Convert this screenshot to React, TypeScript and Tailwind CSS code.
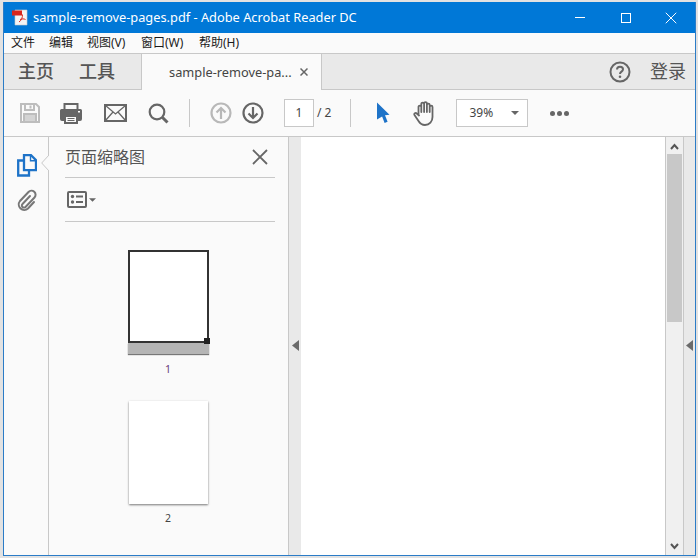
const sans = "font-['Noto_Sans','Noto_Sans_CJK_SC',sans-serif]";

const PdfIcon = () => (
  <svg width="17" height="17" viewBox="0 0 17 17">
    <path d="M3 1h12v15H3z" fill="#f4f4f4" stroke="#c9c9c9" strokeWidth="0.6" />
    <rect x="0" y="1.500" width="10" height="5" fill="#d9261c" />
    <path d="M7 13c2-1 4-5 3.400-7.500M8 10.500c2-.8 4-.8 5.500 0" fill="none" stroke="#d9261c" strokeWidth="1" />
  </svg>
);

const SaveIcon = () => (
  <svg width="22" height="22" viewBox="0 0 22 22" fill="none" stroke="#bdbdbd" strokeWidth="2">
    <path d="M2 2h15l3 3v15H2z" />
    <path d="M6 2v6h9V2M5 20v-8h12v8" />
    <path d="M11.500 3.500v3" />
    <rect x="6" y="13" width="10" height="6" fill="#d4d4d4" stroke="none" />
  </svg>
);

const PrintIcon = () => (
  <svg width="24" height="22" viewBox="0 0 24 22">
    <path d="M5.500 7V2h13v5" fill="none" stroke="#666" strokeWidth="2" />
    <path d="M2.500 7h19A1.500 1.500 0 0 1 23 8.500V17a2 2 0 0 1-2 2h-2v-6H5v6H3a2 2 0 0 1-2-2V8.500A1.500 1.500 0 0 1 2.500 7z" fill="#666" />
    <path d="M6 14h12v7H6z" fill="#fafafa" stroke="#666" strokeWidth="2" />
    <path d="M8.500 16.500h7M8.500 18.500h7" stroke="#666" strokeWidth="1" />
    <rect x="19" y="9" width="2" height="1.500" fill="#fff" />
  </svg>
);

const MailIcon = () => (
  <svg width="23" height="18" viewBox="0 0 23 18" fill="none" stroke="#666">
    <rect x="1" y="1" width="21" height="16" strokeWidth="2" />
    <path d="M1.500 1.500l10 8.500 10-8.500M1.500 16.500l7.500-8.500M21.500 16.500l-7.500-8.500" strokeWidth="1.300" />
  </svg>
);

const SearchIcon = () => (
  <svg width="21" height="21" viewBox="0 0 21 21" fill="none" stroke="#666">
    <circle cx="9" cy="9" r="7.300" strokeWidth="2.200" />
    <path d="M14.500 14.500l5 5" strokeWidth="3" />
  </svg>
);

const ArrowCircle = ({ color, up }: { color: string; up?: boolean }) => (
  <svg width="22" height="22" viewBox="0 0 22 22" fill="none" stroke={color} strokeWidth="2.200">
    <circle cx="11" cy="11" r="9.500" />
    {up ? <path d="M11 17V6M6.500 10.500L11 6l4.500 4.500" /> : <path d="M11 5v11M6.500 11.500L11 16l4.500-4.500" />}
  </svg>
);

const PointerIcon = () => (
  <svg width="14" height="22" viewBox="0 0 14 22">
    <path d="M1 0.500l12.500 12.200-4.500.6 2.600 6.500-3 1.200-2.500-6.500L1 17.500z" fill="#1e73c8" />
  </svg>
);

const HandIcon = () => (
  <svg width="23" height="25" viewBox="0 0 23 25" fill="none" stroke="#666" strokeWidth="1.800" strokeLinecap="round">
    <path d="M5.500 14V6a1.300 1.300 0 0 1 2.800 0v5M8.300 11V3a1.300 1.300 0 0 1 2.800 0v8M11.100 11V2.500a1.300 1.300 0 0 1 2.800 0V11M13.900 11V4a1.300 1.300 0 0 1 2.800 0v7M16.700 11V6a1.300 1.300 0 0 1 2.800 0v10c0 4.500-3 8-7.500 8-3.500 0-5-1.500-6.500-4l-4-6c-.8-1.500 1-2.800 2.300-1.500l2.200 2" />
  </svg>
);

const HelpIcon = () => (
  <svg width="22" height="22" viewBox="0 0 22 22" fill="none" stroke="#666" strokeWidth="2">
    <circle cx="11" cy="11" r="9.500" />
    <path d="M8 8.500c0-1.800 1.300-2.800 3-2.800s3 1 3 2.600c0 2.400-3 2.300-3 4.700" />
    <circle cx="11" cy="15.800" r="1.300" fill="#666" stroke="none" />
  </svg>
);

const PagesIcon = () => (
  <svg width="20" height="23" viewBox="0 0 20 23" fill="none" stroke="#1e73c8" strokeWidth="2.300">
    <path d="M7 1.200h7l5 5v10H7z" />
    <path d="M13.500 1.200v5.500H19" strokeWidth="1.400" />
    <path d="M7 6.500H1.200v15H12v-5" />
  </svg>
);

const ClipIcon = () => (
  <svg width="21" height="22" viewBox="0 0 21 22" fill="none" stroke="#777" strokeWidth="2" strokeLinecap="round">
    <path d="M13 7l-7.500 8a2 2 0 0 0 3 3l9-9.500a4 4 0 0 0-6-5.500l-8.500 9a5.500 5.500 0 0 0 8 7.500l6-6.500" />
  </svg>
);

const ListIcon = () => (
  <svg width="20" height="17" viewBox="0 0 20 17">
    <rect x="1" y="1" width="18" height="15" rx="1" fill="none" stroke="#666" strokeWidth="2" />
    <circle cx="5.500" cy="5.500" r="1.700" fill="#666" />
    <circle cx="5.500" cy="11" r="1.700" fill="#666" />
    <path d="M9 5.500h7M9 11h7" stroke="#666" strokeWidth="2" />
  </svg>
);

const Caret = ({ w, h, color = "#666" }: { w: number; h: number; color?: string }) => (
  <svg width={w} height={h} viewBox="0 0 10 5"><path d="M0 0h10L5 5z" fill={color} /></svg>
);

const LeftArrow = () => (
  <svg width="7" height="11" viewBox="0 0 7 11"><path d="M7 0v11L0 5.500z" fill="#6a6a6a" /></svg>
);

const Cross = ({ size, color, width }: { size: number; color: string; width: number }) => (
  <svg width={size} height={size} viewBox="0 0 16 16" stroke={color} strokeWidth={width}><path d="M1 1l14 14M15 1L1 15" /></svg>
);

const App = () => {
  const menus = [["文件", "w-[38px]"], ["编辑", "w-[38px]"], ["视图(V)", "w-[54px]"], ["窗口(W)", "w-[58px]"], ["帮助(H)", "w-[50px]"]];

  return (
    <div className={`h-[558px] w-[698px] overflow-hidden bg-[#e2e2e2] pl-[3px] pr-[2px] pt-[2px] pb-[2px] ${sans}`}>
      <div className="flex h-full flex-col border-x border-b border-[#2b7cc7] bg-[#fafafa]">
        {/* title bar */}
        <div className="flex h-[31px] shrink-0 items-center bg-[#0078d7] text-white">
          <div className="ml-[8px] mr-[4px]"><PdfIcon /></div>
          <span className="text-[12.800px]">sample-remove-pages.pdf - Adobe Acrobat Reader DC</span>
          <div className="ml-auto flex items-center">
            <div className="flex w-[46px] justify-center pr-[1px]"><div className="h-px w-[10px] bg-white" /></div>
            <div className="flex w-[46px] justify-center"><div className="h-[10px] w-[10px] border border-white" /></div>
            <div className="flex w-[46px] justify-center pr-[2px]"><Cross size={12} color="#fff" width={1.300} /></div>
          </div>
        </div>

        {/* menu */}
        <div className="flex h-[21px] shrink-0 items-center border-b border-[#c8c8c8] pl-[7px] text-[12px] text-[#1a1a1a]">
          {menus.map(([label, w]) => <span key={label} className={w}>{label}</span>)}
        </div>

        {/* tabs */}
        <div className="flex h-[36px] shrink-0 border-b border-[#c8c8c8] bg-[#e9e9e9]">
          <div className="flex w-[137px] items-center pl-[14px] text-[18px] font-medium text-[#555]">
            <span className="w-[61px]">主页</span>
            <span>工具</span>
          </div>
          <div className="-mb-px flex w-[181px] items-center border-x border-[#c8c8c8] bg-[#fafafa] pl-[27px] pt-[1px] text-[12.800px] text-[#444]">
            <span>sample-remove-pa...</span>
            <span className="ml-[8px] -mt-[1px]"><Cross size={8} color="#666" width={3} /></span>
          </div>
          <div className="ml-auto flex items-center pr-[9px]">
            <HelpIcon />
            <span className="ml-[19px] text-[18px] text-[#555]">登录</span>
          </div>
        </div>

        {/* toolbar */}
        <div className="flex h-[47px] shrink-0 items-center border-b border-[#c8c8c8] pl-[15px]">
          <SaveIcon />
          <div className="ml-[18px]"><PrintIcon /></div>
          <div className="ml-[21px]"><MailIcon /></div>
          <div className="ml-[21px]"><SearchIcon /></div>
          <div className="ml-[20px] h-[28px] w-px bg-[#c8c8c8]" />
          <div className="ml-[20px]"><ArrowCircle color="#b8b8b8" up /></div>
          <div className="ml-[10px]"><ArrowCircle color="#666" /></div>
          <div className="ml-[20px] flex h-[28px] w-[30px] items-center justify-center border border-[#c8c8c8] bg-white text-[12px] text-[#444]">1</div>
          <span className="ml-[3px] text-[12px] text-[#444]">/ 2</span>
          <div className="ml-[19px] h-[28px] w-px bg-[#c8c8c8]" />
          <div className="ml-[25px]"><PointerIcon /></div>
          <div className="ml-[23px]"><HandIcon /></div>
          <div className="ml-[20px] flex h-[28px] w-[72px] items-center justify-between border border-[#c8c8c8] bg-white pl-[12px] pr-[8px] text-[12px] text-[#444]">
            <span>39%</span>
            <Caret w={8} h={4} />
          </div>
          <div className="ml-[22px] flex gap-[2px]">
            <div className="h-[5px] w-[5px] rounded-full bg-[#666]" />
            <div className="h-[5px] w-[5px] rounded-full bg-[#666]" />
            <div className="h-[5px] w-[5px] rounded-full bg-[#666]" />
          </div>
        </div>

        {/* main area */}
        <div className="flex min-h-0 flex-1">
          <div className="relative flex w-[45px] shrink-0 flex-col items-center gap-[12px] border-r border-[#c8c8c8] pl-[2px] pt-[17px]">
            <PagesIcon />
            <ClipIcon />
            <svg className="absolute -right-px top-[18px]" width="8" height="16" viewBox="0 0 8 16">
              <path d="M8 0L0.700 8 8 16" fill="#fafafa" stroke="#c8c8c8" />
            </svg>
          </div>
          <div className="flex w-[240px] shrink-0 flex-col border-r border-[#c8c8c8] pl-[16px] pr-[13px]">
            <div className="flex h-[41px] shrink-0 items-center justify-between border-b border-[#c8c8c8] pr-[7px] text-[16px] text-[#555]">
              <span>页面缩略图</span>
              <Cross size={16} color="#666" width={1.800} />
            </div>
            <div className="flex h-[44px] shrink-0 items-center gap-[2px] border-b border-[#c8c8c8] pl-[2px]">
              <ListIcon />
              <Caret w={7} h={4} />
            </div>
            <div className="flex flex-col items-center pr-[4px] pt-[28px]">
              <div className="relative h-[93px] w-[81px] border-2 border-[#333] bg-white">
                <div className="absolute -bottom-[3px] -right-[3px] h-[6px] w-[6px] bg-[#222]" />
              </div>
              <div className="h-[11px] w-[81px] bg-[#b5b5b5] shadow-[0_1px_1px_#777]" />
              <span className="mt-[7px] text-[10.500px] leading-[16px] text-[#6a3a7a]">1</span>
              <div className="mt-[24px] h-[103px] w-[79px] bg-white shadow-[0_1px_2px_#777]" />
              <span className="mt-[6px] text-[10.500px] leading-[16px] text-[#444]">2</span>
            </div>
          </div>
          <div className="flex w-[12px] shrink-0 items-center justify-center bg-[#e9e9e9] pb-[2px]"><LeftArrow /></div>
          <div className="flex-1 bg-white" />
          <div className="flex w-[19px] shrink-0 flex-col items-center border-x border-[#c8c8c8] bg-[#f0f0f0] pb-[5px] pt-[6px]">
            <svg width="9" height="7" viewBox="0 0 9 7" fill="none" stroke="#555" strokeWidth="2"><path d="M1 6l3.500-4L8 6" /></svg>
            <div className="mt-[4px] h-[168px] w-[15px] bg-[#c8c8c8]" />
            <svg className="mt-auto" width="9" height="7" viewBox="0 0 9 7" fill="none" stroke="#555" strokeWidth="2"><path d="M1 1l3.500 4L8 1" /></svg>
          </div>
          <div className="flex w-[11px] shrink-0 items-center justify-center bg-[#e9e9e9] pb-[2px]"><LeftArrow /></div>
        </div>
      </div>
    </div>
  );
};

export default App;
